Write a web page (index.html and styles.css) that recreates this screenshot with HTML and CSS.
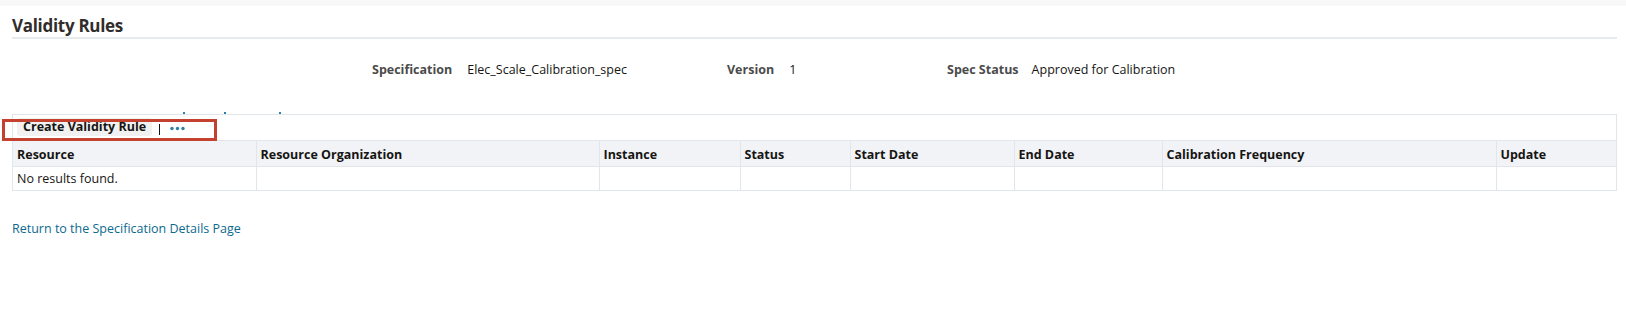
FILE: index.html
```html
<!DOCTYPE html>
<html lang="en">
<head>
  <meta charset="utf-8">
  <title>Validity Rules</title>
  <link rel="stylesheet" href="styles.css">
</head>
<body>
  <div class="topbar"></div>

  <div class="page">
    <!-- Page header -->
    <h1 class="title">Validity Rules</h1>

    <!-- Specification summary -->
    <div class="spec">
      <div class="field f-spec"><span class="label">Specification</span><span class="value">Elec_Scale_Calibration_spec</span></div>
      <div class="field f-version"><span class="label">Version</span><span class="value">1</span></div>
      <div class="field f-status"><span class="label">Spec Status</span><span class="value gap-sm">Approved for Calibration</span></div>
    </div>

    <!-- Clipped marks above the table -->
    <div class="ticks"><i></i><i></i><i></i></div>

    <!-- Results table -->
    <div class="results">
      <div class="toolbar">
        <button class="btn">Create Validity Rule</button>
        <span class="sep"></span>
        <svg class="more" width="15" height="5" viewBox="0 0 15 5">
          <circle cx="2" cy="2.5" r="1.7"/>
          <circle cx="7.5" cy="2.5" r="1.7"/>
          <circle cx="13" cy="2.5" r="1.7"/>
        </svg>
      </div>
      <table class="grid">
        <colgroup>
          <col style="width:243px">
          <col style="width:343px">
          <col style="width:141px">
          <col style="width:110px">
          <col style="width:164px">
          <col style="width:148px">
          <col style="width:334px">
          <col>
        </colgroup>
        <thead>
          <tr>
            <th>Resource</th>
            <th>Resource Organization</th>
            <th>Instance</th>
            <th>Status</th>
            <th>Start Date</th>
            <th>End Date</th>
            <th>Calibration Frequency</th>
            <th>Update</th>
          </tr>
        </thead>
        <tbody>
          <tr>
            <td>No results found.</td>
            <td></td><td></td><td></td><td></td><td></td><td></td><td></td>
          </tr>
        </tbody>
      </table>
      <!-- Annotation box around the toolbar -->
      <div class="callout"></div>
    </div>

    <a class="back" href="#">Return to the Specification Details Page</a>
  </div>
</body>
</html>
```

FILE: styles.css
```css
/* Base */
body {
  margin: 0;
  background: #fff;
  font-family: "Open Sans", "Noto Sans", sans-serif;
  font-size: 12.5px;
  color: #161513;
}

.topbar {
  height: 6px;
  background: #f8f8f8;
}

.page {
  padding: 0 9px 0 12px;
}

/* Title */
.title {
  margin: 10px 0 0;
  font-size: 17px;
  line-height: 20px;
  font-weight: 700;
  letter-spacing: -0.3px;
  color: #312d2a;
  padding-bottom: 1px;
  border-bottom: 2px solid #e7ebef;
}

/* Specification summary */
.spec {
  display: flex;
  margin: 21px 0 0;
  padding-left: 360px;
  line-height: 20px;
}

.field {
  display: flex;
  gap: 15px;
}

.f-spec { width: 355px; }
.f-version { width: 220px; }
.f-status { gap: 13px; }

.label {
  font-weight: 700;
  color: #4b4b4b;
}

.value {
  color: #161513;
}

/* Little blue marks peeking above the table */
.ticks {
  display: flex;
  height: 3px;
  margin-top: 31px;
  padding-left: 171px;
}

.ticks i {
  width: 2px;
  height: 2px;
  background: #2d7fa6;
  margin-top: 1px;
}

.ticks i:nth-child(2) { margin-left: 39px; }
.ticks i:nth-child(3) { margin-left: 53px; }

/* Results */
.results {
  position: relative;
  width: 1605px;
  border: 1px solid #e1e6eb;
  box-sizing: border-box;
}

.toolbar {
  display: flex;
  align-items: flex-start;
  height: 25px;
  padding-left: 4px;
}

.btn {
  font: inherit;
  font-weight: 700;
  color: #161513;
  background: #f1f1f1;
  border: 0;
  border-radius: 3px;
  padding: 0 6px;
  height: 18px;
  line-height: 18px;
  margin-top: 3px;
}

.sep {
  width: 1px;
  height: 11px;
  background: #161513;
  margin: 9px 0 0 7px;
}

.more {
  fill: #2d7fa6;
  margin: 11px 0 0 10px;
}

.grid {
  width: 100%;
  border-collapse: collapse;
  table-layout: fixed;
}

.grid th,
.grid td {
  border: 1px solid #e1e6eb;
  text-align: left;
  padding: 0 4px;
  height: 23px;
  line-height: 20px;
  white-space: nowrap;
  overflow: hidden;
}

.grid tr > :first-child { border-left: 0; }
.grid tr > :last-child { border-right: 0; }
.grid tbody tr:last-child td { border-bottom: 0; }

.grid th {
  background: #f1f3f6;
  font-weight: 700;
  color: #161513;
  padding-top: 2px;
}

.callout {
  position: absolute;
  left: -11px;
  top: 4px;
  width: 215px;
  height: 22px;
  border: 3px solid #c4402f;
  box-sizing: border-box;
}

/* Back link */
.back {
  display: block;
  margin-top: 28px;
  line-height: 20px;
  color: #0b6a8e;
  text-decoration: none;
}
```
